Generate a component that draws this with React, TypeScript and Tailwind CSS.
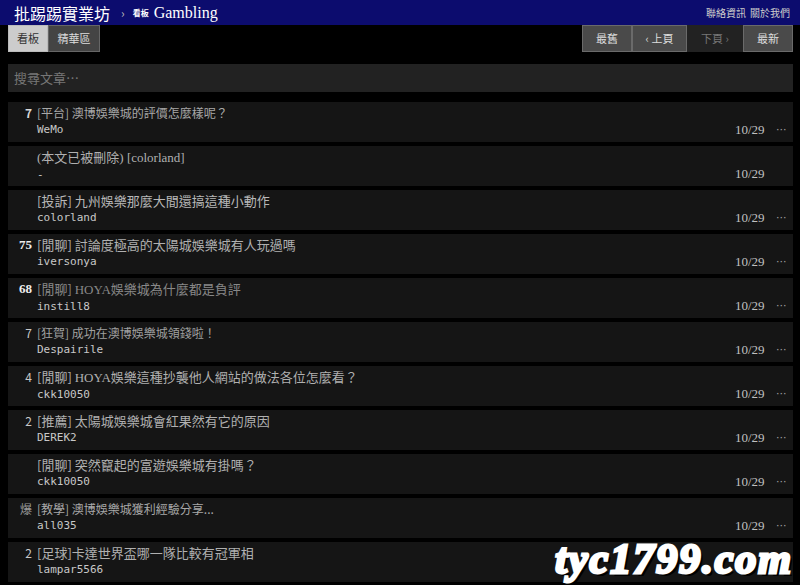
import React from "react";

interface Post {
  num: string;
  numClass: string;
  title: React.ReactNode;
  titleClass: string;
  author: string;
  date: string;
  more: boolean;
}

const serif = "font-['Liberation_Serif','Noto_Sans_CJK_TC',serif]";

const posts: Post[] = [
  {
    num: "7",
    numClass: "text-[#d8d8d8] font-bold text-[12px]",
    title: "[平台] 澳博娛樂城的評價怎麼樣呢？",
    titleClass: "text-[12px] text-[#a8a8a8]",
    author: "WeMo",
    date: "10/29",
    more: true,
  },
  {
    num: "",
    numClass: "",
    title: (
      <span className={serif}>(本文已被刪除) [colorland]</span>
    ),
    titleClass: "text-[13px] text-[#b0b0b0]",
    author: "-",
    date: "10/29",
    more: false,
  },
  {
    num: "",
    numClass: "",
    title: "[投訴] 九州娛樂那麼大間還搞這種小動作",
    titleClass: "text-[13px] text-[#b8b8b8]",
    author: "colorland",
    date: "10/29",
    more: true,
  },
  {
    num: "75",
    numClass: `text-[#eeeeee] font-bold text-[13px] ${serif}`,
    title: "[閒聊] 討論度極高的太陽城娛樂城有人玩過嗎",
    titleClass: "text-[13px] text-[#b0b0b0]",
    author: "iversonya",
    date: "10/29",
    more: true,
  },
  {
    num: "68",
    numClass: `text-[#eeeeee] font-bold text-[13px] ${serif}`,
    title: (
      <>
        [閒聊] <span className={serif}>HOYA</span>娛樂城為什麼都是負評
      </>
    ),
    titleClass: "text-[13px] text-[#888888]",
    author: "instill8",
    date: "10/29",
    more: true,
  },
  {
    num: "7",
    numClass: "text-[#c8c8c8] text-[12px]",
    title: "[狂賀] 成功在澳博娛樂城領錢啦！",
    titleClass: "text-[12px] text-[#a0a0a0]",
    author: "Despairile",
    date: "10/29",
    more: true,
  },
  {
    num: "4",
    numClass: "text-[#c8c8c8] text-[12px]",
    title: (
      <>
        [閒聊] <span className={serif}>HOYA</span>娛樂這種抄襲他人網站的做法各位怎麼看？
      </>
    ),
    titleClass: "text-[13px] text-[#b0b0b0]",
    author: "ckk10050",
    date: "10/29",
    more: true,
  },
  {
    num: "2",
    numClass: "text-[#c8c8c8] text-[12px]",
    title: "[推薦] 太陽城娛樂城會紅果然有它的原因",
    titleClass: "text-[13px] text-[#b0b0b0]",
    author: "DEREK2",
    date: "10/29",
    more: true,
  },
  {
    num: "",
    numClass: "",
    title: "[閒聊] 突然竄起的富遊娛樂城有掛嗎？",
    titleClass: "text-[13px] text-[#b0b0b0]",
    author: "ckk10050",
    date: "10/29",
    more: true,
  },
  {
    num: "爆",
    numClass: "text-[#9a9a9a] text-[12px]",
    title: "[教學] 澳博娛樂城獲利經驗分享...",
    titleClass: "text-[12px] text-[#a8a8a8]",
    author: "all035",
    date: "10/29",
    more: true,
  },
  {
    // date and menu of this row sit under the watermark
    num: "2",
    numClass: "text-[#c8c8c8] text-[12px]",
    title: "[足球]卡達世界盃哪一隊比較有冠軍相",
    titleClass: "text-[13px] text-[#b0b0b0]",
    author: "lampar5566",
    date: "",
    more: false,
  },
];

const PostRow: React.FC<{ post: Post }> = ({ post }) => (
  <div className="flex h-[40px] bg-[#151515]">
    <div className={`w-[24px] pt-[3px] text-right leading-[16px] ${post.numClass}`}>
      {post.num}
    </div>
    <div className="ml-[5px] flex-1 pt-[3px]">
      <div className={`leading-[16px] whitespace-nowrap ${post.titleClass}`}>
        {post.title}
      </div>
      <div className="mt-[1px] font-['DejaVu_Sans_Mono',monospace] text-[11px] leading-[16px] text-[#c8c8c8]">
        {post.author}
      </div>
    </div>
    <div className="flex items-end pb-[4px]">
      <span className={`${serif} w-[31px] text-[13px] leading-[16px] text-[#c0c0c0]`}>
        {post.date}
      </span>
      <span className="ml-[10px] mr-[6px] w-[11px] text-[11px] leading-[16px] text-[#a0a0a0] font-['DejaVu_Sans',sans-serif]">
        {post.more ? "···" : ""}
      </span>
    </div>
  </div>
);

const NavButton: React.FC<{ label: string; className: string }> = ({
  label,
  className,
}) => (
  <div
    className={`flex h-[27px] items-center justify-center border text-[11px] ${className}`}
  >
    {label}
  </div>
);

export default function App() {
  return (
    <div className="relative h-[585px] w-[800px] overflow-hidden bg-black font-['Noto_Sans_CJK_TC','Noto_Sans',sans-serif]">
      <div className="flex h-[25px] items-center bg-[#0c0c6e] pl-[14px] pr-[10px]">
        <span className="text-[16px] leading-none text-white">批踢踢實業坊</span>
        <span className="ml-[11px] text-[12px] text-[#bbbbbb]">›</span>
        <span className="ml-[8px] text-[8px] font-bold text-white">看板</span>
        <span className={`ml-[5px] text-[16px] leading-none text-white ${serif}`}>
          Gambling
        </span>
        <div className="ml-auto flex gap-[4px] text-[10px] text-[#cccccc]">
          <span>聯絡資訊</span>
          <span>關於我們</span>
        </div>
      </div>

      <div className="pl-[8px] pr-[7px]">
        <div className="flex justify-between">
          <div className="flex">
            <NavButton
              label="看板"
              className="w-[40px] border-[#bbbbbb] bg-[#cccccc] text-[#333333]"
            />
            <NavButton
              label="精華區"
              className="w-[52px] border-[#666666] bg-[#444444] text-[#dddddd]"
            />
          </div>
          <div className="flex">
            <NavButton
              label="最舊"
              className="w-[50px] border-[#6a6a6a] bg-[#4a4a4a] text-[#dddddd]"
            />
            <NavButton
              label="‹ 上頁"
              className="w-[55px] border-[#6a6a6a] bg-[#4a4a4a] text-[#dddddd]"
            />
            <NavButton
              label="下頁 ›"
              className="w-[56px] border-[#222222] bg-[#222222] text-[#777777]"
            />
            <NavButton
              label="最新"
              className="w-[50px] border-[#6a6a6a] bg-[#4a4a4a] text-[#dddddd]"
            />
          </div>
        </div>

        <div className="mt-[12px] flex h-[28px] items-center bg-[#222222] pl-[6px] text-[13px] text-[#777777]">
          搜尋文章⋯
        </div>

        <div className="mt-[10px] flex flex-col gap-[4px]">
          {posts.map((post, index) => (
            <PostRow key={index} post={post} />
          ))}
        </div>
      </div>

      <div className="absolute right-[7px] bottom-[5px] font-['Liberation_Serif',serif] text-[42px] font-black italic leading-none tracking-[2px] text-white [-webkit-text-stroke:3px_white] [text-shadow:3px_3px_0_#000]">
        tyc1799.com
      </div>
    </div>
  );
}
